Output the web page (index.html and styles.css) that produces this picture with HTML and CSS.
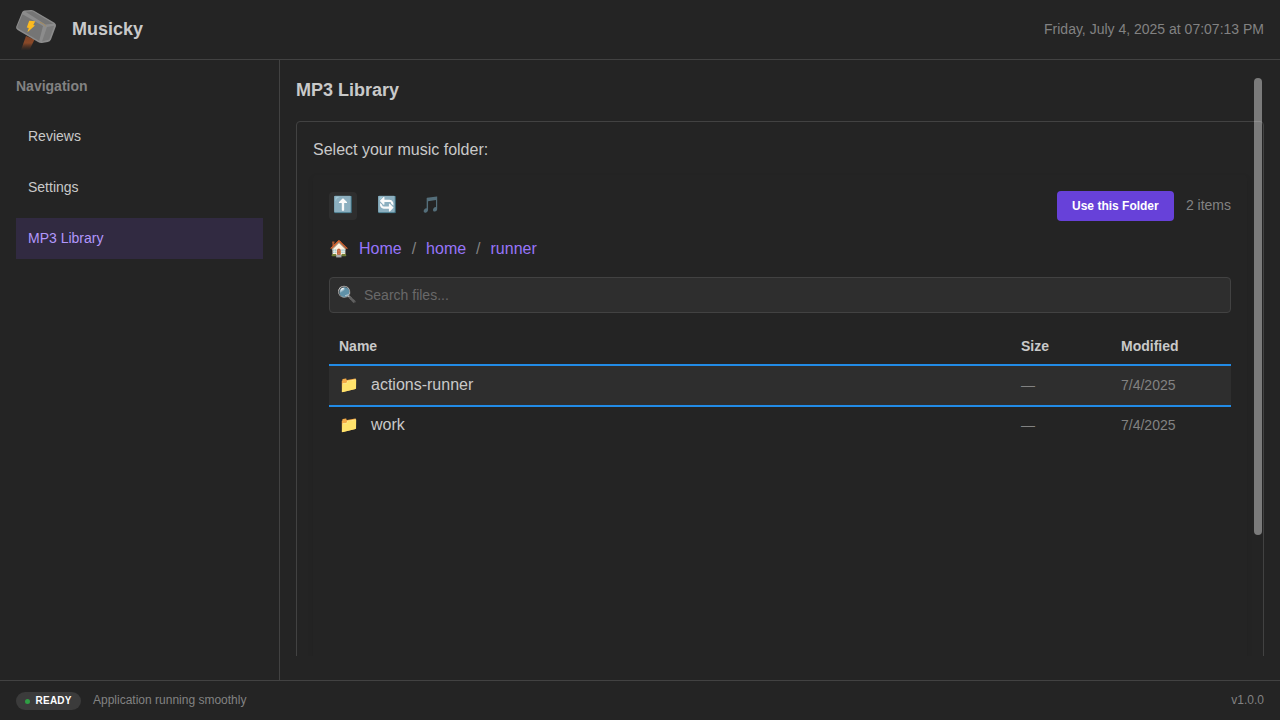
FILE: index.html
```html
<!DOCTYPE html>
<html lang="en">
<head>
<meta charset="utf-8">
<title>Musicky</title>
<link rel="stylesheet" href="styles.css">
</head>
<body>
<div class="app">
  <header class="header">
    <svg class="logo" viewBox="0 0 40 40">
      <defs>
        <linearGradient id="handle" x1="0" y1="0" x2="0" y2="1"><stop offset="0" stop-color="#804427"/><stop offset=".5" stop-color="#8a4928"/><stop offset="1" stop-color="#5b3422" stop-opacity=".1"/></linearGradient>
      </defs>
      <path d="M10 26L18.500 29.500L13.500 40L5 40Z" fill="url(#handle)"/>
      <path d="M6.200 2.100Q7 .7 8.500 .6L15 .1Q16.500 0 18 .8L38.500 12.800Q40.300 14 40 16L35 29.500Q34 31.700 31.800 32L26 32.900Q24 33.200 22 32L2 20.300Q-.3 19 .1 17Z" fill="#8c8c8c"/>
      <path d="M6.500 4.200L27 16L23.200 31L2.500 18.800Q.8 18 1.300 16.500Z" fill="#757575"/>
      <path d="M9.500 1.800L16.500 1.300L37.500 13.700L29.500 14.500Z" fill="#757575"/>
      <path d="M31 17L38.300 15.800L33.300 29.500L26 31.500Z" fill="#7b7b7b"/>
      <path d="M13.200 10.800L19.200 11.200L17.300 14.900L19 15.400L11.400 22.200L12.800 17.900L10.800 17.400Z" fill="#fcba20"/>
      <path d="M24 12.300L27 13.600L30 16.300" fill="none" stroke="#b68a39" stroke-width=".6"/>
    </svg>
    <h1 class="brand">Musicky</h1>
    <span class="clock">Friday, July 4, 2025 at 07:07:13 PM</span>
  </header>
  <div class="body">
    <nav class="nav">
      <div class="nav-title">Navigation</div>
      <a class="nav-link">Reviews</a>
      <a class="nav-link">Settings</a>
      <a class="nav-link nav-active">MP3 Library</a>
    </nav>
    <main class="main">
      <h2 class="title">MP3 Library</h2>
      <div class="viewport">
        <section class="card">
          <div class="prompt">Select your music folder:</div>
          <div class="browser">
            <div class="toolbar">
              <span class="tool tool-active">⬆️</span>
              <span class="tool">🔄</span>
              <span class="tool">🎵</span>
              <button class="use">Use this Folder</button>
              <span class="count">2 items</span>
            </div>
            <div class="crumbs"><span class="house">🏠</span><a>Home</a><i>/</i><a>home</a><i>/</i><a>runner</a></div>
            <div class="search"><span class="lens">🔍</span><span>Search files...</span></div>
            <div class="row head"><span>Name</span><span>Size</span><span>Modified</span></div>
            <div class="row selected"><span class="name"><span class="folder">📁</span>actions-runner</span><span>—</span><span>7/4/2025</span></div>
            <div class="row"><span class="name"><span class="folder">📁</span>work</span><span>—</span><span>7/4/2025</span></div>
          </div>
        </section>
      </div>
      <div class="thumb"></div>
    </main>
  </div>
  <footer class="footer">
    <span class="badge"><span class="dot"></span>READY</span>
    <span class="status">Application running smoothly</span>
    <span class="version">v1.0.0</span>
  </footer>
</div>
</body>
</html>
```
FILE: styles.css
```css
* { box-sizing: border-box; }
body { margin: 0; background: #242424; color: #c9c9c9; font-family: "Liberation Sans", "Noto Color Emoji", sans-serif; font-size: 16px; }
.app { height: 720px; display: flex; flex-direction: column; overflow: hidden; }
.header { height: 60px; flex: none; display: flex; align-items: center; padding: 0 16px; border-bottom: 1px solid #424242; }
.logo { width: 40px; height: 40px; overflow: visible; }
.brand { margin: 0 auto 0 16px; padding-bottom: 2px; font-size: 18px; line-height: 24px; }
.clock { padding-bottom: 2px; font-size: 14px; color: #828282; }
.body { flex: 1; min-height: 0; display: flex; }
.nav { width: 280px; flex: none; padding: 16px; border-right: 1px solid #424242; display: flex; flex-direction: column; font-size: 14px; }
.nav-title { color: #828282; font-weight: bold; line-height: 20px; margin-bottom: 20px; }
.nav-link { height: 41px; line-height: 40px; padding: 0 12px; margin-bottom: 10px; }
.nav-active { background: #312a41; color: #b197fc; }
.main { flex: 1; min-width: 0; position: relative; padding: 16px; display: flex; flex-direction: column; }
.title { margin: 0 0 17px; font-size: 18px; line-height: 28px; }
.viewport { height: 535px; overflow: hidden; }
.card { height: 780px; border: 1px solid #424242; border-radius: 4px; padding: 16px; }
.prompt { line-height: 24px; height: 37px; }
.browser { height: 600px; border-radius: 4px; padding: 16px; box-shadow: 0 3px 6px rgba(0,0,0,.09); }
.toolbar { display: flex; align-items: center; height: 30px; }
.tool { width: 28px; height: 28px; margin-right: 16px; border-radius: 4px; font-size: 16px; line-height: 25px; text-align: center; }
.tool-active { background: #2e2e2e; }
.use { margin: 0 12px 0 auto; width: 117px; height: 30px; border: 0; border-radius: 4px; padding: 0; background: #6741d9; color: #fff; font: bold 12px "Liberation Sans", sans-serif; }
.count { padding-bottom: 2px; font-size: 14px; line-height: 28px; color: #828282; }
.crumbs { display: flex; align-items: center; height: 24px; margin-top: 16px; color: #9775fa; }
.house { width: 30px; padding-bottom: 2px; }
.crumbs i { width: 24.400px; text-align: center; font-style: normal; color: #828282; }
.search { display: flex; align-items: center; height: 36px; margin-top: 16px; padding-left: 7px; border: 1px solid #424242; border-radius: 4px; background: #2e2e2e; color: #696969; font-size: 14px; }
.lens { width: 27px; padding-bottom: 2px; font-size: 16px; }
.row { display: grid; grid-template-columns: 682px 100px 1fr; align-items: center; height: 36px; padding: 0 10px; font-size: 14px; color: #828282; }
.head { height: 35px; margin-top: 16px; padding-bottom: 2px; font-weight: bold; color: #c9c9c9; }
.selected { height: 43px; padding-bottom: 2px; border-top: 2px solid #228be6; border-bottom: 2px solid #228be6; background: #2e2e2e; }
.name { display: flex; align-items: center; height: 20px; line-height: 20px; font-size: 16px; color: #c9c9c9; }
.folder { width: 32px; height: 20px; line-height: 19px; }
.thumb { position: absolute; right: 18px; top: 18px; width: 8px; height: 457px; border-radius: 4px; background: rgba(255,255,255,.4); }
.footer { height: 40px; flex: none; display: flex; align-items: center; padding: 0 16px; border-top: 1px solid #424242; font-size: 12px; color: #828282; }
.badge { display: flex; align-items: center; gap: 5.500px; width: 65px; height: 18px; padding-left: 9px; margin: 1px 12px 0 0; border-radius: 9px; background: #3b3b3b; color: #fff; font-size: 10px; line-height: 16px; padding-bottom: 1px; font-weight: bold; letter-spacing: .25px; }
.dot { width: 5px; height: 5px; margin-top: 1px; border-radius: 50%; background: #2f9e44; }
.status { padding-bottom: 2px; }
.version { margin-left: auto; padding-bottom: 2px; }
```
